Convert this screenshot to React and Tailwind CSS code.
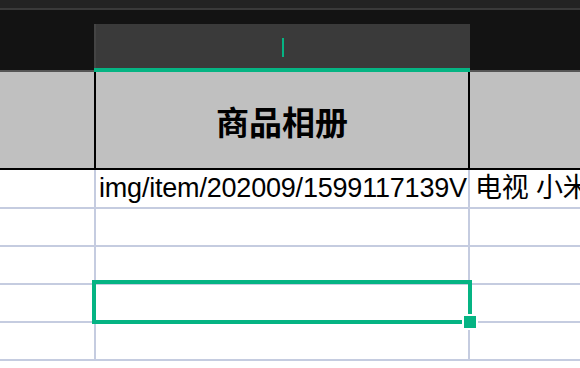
const green = "bg-[#05b483]";

function DataRow({ b, c, first }) {
  return (
    <div className={`flex ${first ? "h-[39px]" : "h-[38px]"} border-b-2 border-[#c5cce0]`}>
      <div className="w-[94px] shrink-0" />
      <div className="w-[376px] shrink-0 border-x-2 border-[#c5cce0] overflow-hidden whitespace-nowrap pl-[3px] flex items-center">
        {b}
      </div>
      <div className="flex-1 overflow-hidden whitespace-nowrap pl-[5px] flex items-center">{c}</div>
    </div>
  );
}

export default function App() {
  return (
    <div
      className="relative w-[580px] h-[368px] overflow-hidden bg-white text-black"
      style={{ fontFamily: '"Liberation Sans", "Noto Sans CJK SC", sans-serif' }}
    >
      {/* toolbar edge */}
      <div className="h-2 bg-[#232323]" />
      <div className="h-[2px] bg-[#3a3a3a]" />

      {/* column letter bar */}
      <div className="flex h-[62px] bg-[#131313]">
        <div className="w-[94px] flex flex-col justify-end">
          <div className="h-[2px] bg-[#555]" />
        </div>
        <div className="w-[376px] mt-[14px] flex flex-col">
          <div className="flex-1 bg-[#3a3a3a] border-l-2 border-[#444] flex items-center justify-center">
            <div className={`w-[2px] h-[19px] ${green} mt-[3px]`} />
          </div>
          <div className={`h-1 ${green}`} />
        </div>
        <div className="flex-1 flex flex-col justify-end">
          <div className="h-[2px] bg-[#555]" />
        </div>
      </div>

      {/* header row */}
      <div className="flex h-[98px] bg-[#c0c0c0] border-b-2 border-black">
        <div className="w-[94px] shrink-0" />
        <div className="w-[376px] shrink-0 border-x-2 border-black flex items-center justify-center">
          <span className="text-[33px] font-bold leading-none mt-[2px]" style={{ fontFamily: '"Noto Sans CJK SC", sans-serif' }}>
            商品相册
          </span>
        </div>
        <div className="flex-1" />
      </div>

      {/* data rows */}
      <div className="text-[27px] leading-none tracking-[-0.2px]">
        <DataRow first b="img/item/202009/1599117139V" c="电视 小米" />
        <DataRow />
        <DataRow />
        <DataRow />
        <DataRow />
      </div>

      {/* selection */}
      <div className="absolute left-[92px] top-[280px] w-[380px] h-[44px] border-4 border-[#05b483]" />
      <div className={`absolute left-[462px] top-[314px] w-4 h-4 ${green} border-2 border-white`} />
    </div>
  );
}
